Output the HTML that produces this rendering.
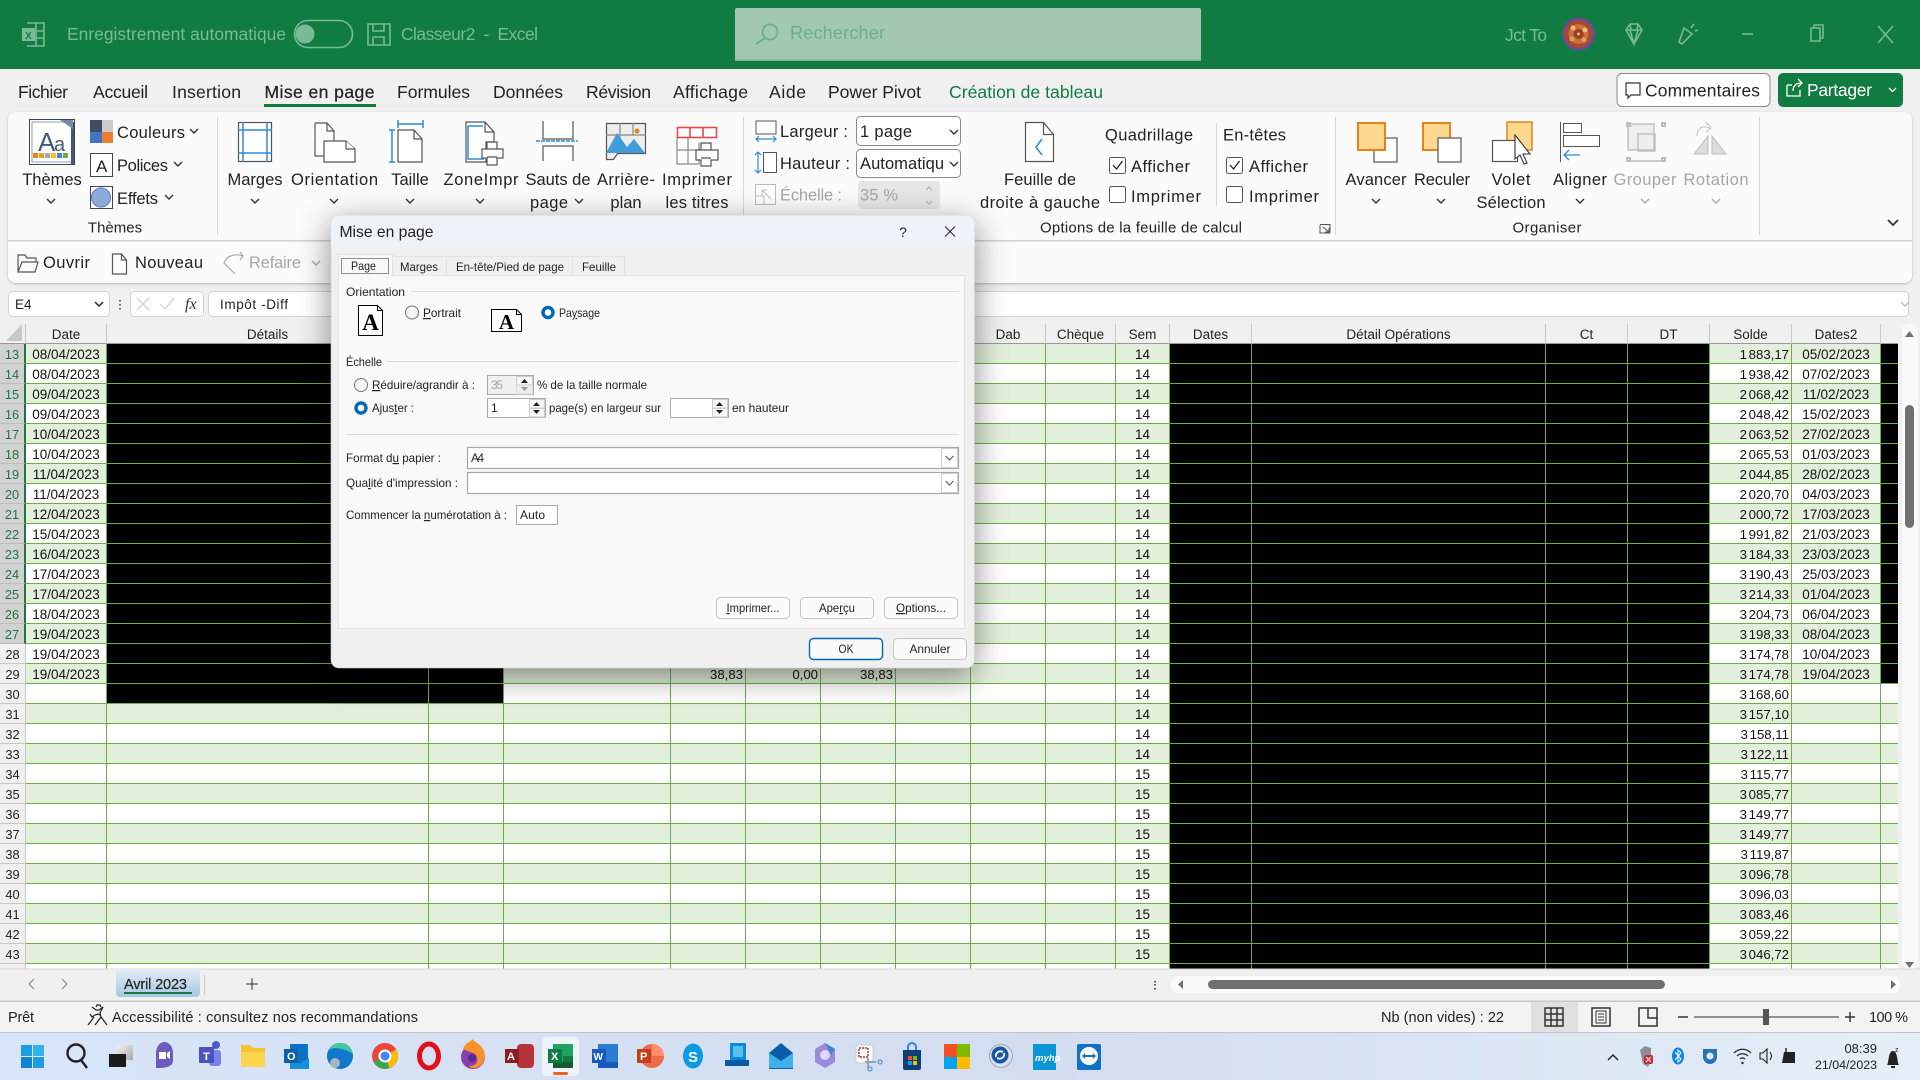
<!DOCTYPE html>
<html lang="fr"><head><meta charset="utf-8"><title>Classeur2 - Excel</title>
<style>
html,body{margin:0;padding:0;width:1920px;height:1080px;overflow:hidden;background:#f0f0f0;font-family:"Liberation Sans",sans-serif}
#wrap{position:absolute;left:0;top:324px;width:1898px;height:645px;overflow:hidden}
table{border-collapse:separate;border-spacing:0;table-layout:fixed;width:1898px}
td,th{height:20px;box-sizing:border-box;border-right:1px solid #70ad47;border-bottom:1px solid #70ad47;font:13.5px "Liberation Sans",sans-serif;padding:3px 2px 0;overflow:hidden;white-space:nowrap;text-align:center;color:#111;font-weight:normal;background:#fff;line-height:16px}
tr.g td{background:#e2efda}
th{background:#f0f0f0;border-right:1px solid #c8c8c8;border-bottom:1px solid #9a9a9a;color:#222}
td.h,tr.g td.h{background:#f0f0f0;border-right:1px solid #c8c8c8;border-bottom:1px solid #c8c8c8;font-size:12.8px;color:#222;padding:3px 0 0}
td.s,tr.g td.s{background:#d2d2d2;border-right:2px solid #217346;border-bottom:1px solid #bdbdbd;font-size:12.8px;color:#217346;padding:3px 0 0}
td.k,tr.g td.k{background:#000}
td.n{text-align:right;word-spacing:-2px;font-size:13.2px}
svg{position:absolute;left:0;top:0}
svg text{font-family:"Liberation Sans",sans-serif;fill:#222}
.m{text-anchor:middle}
.r{font-size:16.5px}
.t{font-size:17.6px}
.d{font-size:12px}
.tb{fill:#79ba97!important;font-size:17.4px}
.gr{fill:#a6a6a6!important}
</style></head><body>
<div id="wrap"><table>
<colgroup><col style="width:26px"><col style="width:81px"><col style="width:322px"><col style="width:75px"><col style="width:167px"><col style="width:75px"><col style="width:75px"><col style="width:75px"><col style="width:75px"><col style="width:75px"><col style="width:70px"><col style="width:54px"><col style="width:82px"><col style="width:294px"><col style="width:82px"><col style="width:82px"><col style="width:82px"><col style="width:89px"><col style="width:18px"></colgroup>
<tr><th></th><th>Date</th><th>Détails</th><th></th><th></th><th></th><th></th><th></th><th></th><th>Dab</th><th>Chèque</th><th>Sem</th><th>Dates</th><th>Détail Opérations</th><th>Ct</th><th>DT</th><th>Solde</th><th>Dates2</th><th></th></tr>
<tr class="g"><td class="s">13</td><td>08/04/2023</td><td class="k"></td><td class="k"></td><td></td><td></td><td></td><td></td><td></td><td></td><td></td><td>14</td><td class="k"></td><td class="k"></td><td class="k"></td><td class="k"></td><td class="n">1 883,17</td><td>05/02/2023</td><td class="k"></td></tr>
<tr><td class="s">14</td><td>08/04/2023</td><td class="k"></td><td class="k"></td><td></td><td></td><td></td><td></td><td></td><td></td><td></td><td>14</td><td class="k"></td><td class="k"></td><td class="k"></td><td class="k"></td><td class="n">1 938,42</td><td>07/02/2023</td><td class="k"></td></tr>
<tr class="g"><td class="s">15</td><td>09/04/2023</td><td class="k"></td><td class="k"></td><td></td><td></td><td></td><td></td><td></td><td></td><td></td><td>14</td><td class="k"></td><td class="k"></td><td class="k"></td><td class="k"></td><td class="n">2 068,42</td><td>11/02/2023</td><td class="k"></td></tr>
<tr><td class="s">16</td><td>09/04/2023</td><td class="k"></td><td class="k"></td><td></td><td></td><td></td><td></td><td></td><td></td><td></td><td>14</td><td class="k"></td><td class="k"></td><td class="k"></td><td class="k"></td><td class="n">2 048,42</td><td>15/02/2023</td><td class="k"></td></tr>
<tr class="g"><td class="s">17</td><td>10/04/2023</td><td class="k"></td><td class="k"></td><td></td><td></td><td></td><td></td><td></td><td></td><td></td><td>14</td><td class="k"></td><td class="k"></td><td class="k"></td><td class="k"></td><td class="n">2 063,52</td><td>27/02/2023</td><td class="k"></td></tr>
<tr><td class="s">18</td><td>10/04/2023</td><td class="k"></td><td class="k"></td><td></td><td></td><td></td><td></td><td></td><td></td><td></td><td>14</td><td class="k"></td><td class="k"></td><td class="k"></td><td class="k"></td><td class="n">2 065,53</td><td>01/03/2023</td><td class="k"></td></tr>
<tr class="g"><td class="s">19</td><td>11/04/2023</td><td class="k"></td><td class="k"></td><td></td><td></td><td></td><td></td><td></td><td></td><td></td><td>14</td><td class="k"></td><td class="k"></td><td class="k"></td><td class="k"></td><td class="n">2 044,85</td><td>28/02/2023</td><td class="k"></td></tr>
<tr><td class="s">20</td><td>11/04/2023</td><td class="k"></td><td class="k"></td><td></td><td></td><td></td><td></td><td></td><td></td><td></td><td>14</td><td class="k"></td><td class="k"></td><td class="k"></td><td class="k"></td><td class="n">2 020,70</td><td>04/03/2023</td><td class="k"></td></tr>
<tr class="g"><td class="s">21</td><td>12/04/2023</td><td class="k"></td><td class="k"></td><td></td><td></td><td></td><td></td><td></td><td></td><td></td><td>14</td><td class="k"></td><td class="k"></td><td class="k"></td><td class="k"></td><td class="n">2 000,72</td><td>17/03/2023</td><td class="k"></td></tr>
<tr><td class="s">22</td><td>15/04/2023</td><td class="k"></td><td class="k"></td><td></td><td></td><td></td><td></td><td></td><td></td><td></td><td>14</td><td class="k"></td><td class="k"></td><td class="k"></td><td class="k"></td><td class="n">1 991,82</td><td>21/03/2023</td><td class="k"></td></tr>
<tr class="g"><td class="s">23</td><td>16/04/2023</td><td class="k"></td><td class="k"></td><td></td><td></td><td></td><td></td><td></td><td></td><td></td><td>14</td><td class="k"></td><td class="k"></td><td class="k"></td><td class="k"></td><td class="n">3 184,33</td><td>23/03/2023</td><td class="k"></td></tr>
<tr><td class="s">24</td><td>17/04/2023</td><td class="k"></td><td class="k"></td><td></td><td></td><td></td><td></td><td></td><td></td><td></td><td>14</td><td class="k"></td><td class="k"></td><td class="k"></td><td class="k"></td><td class="n">3 190,43</td><td>25/03/2023</td><td class="k"></td></tr>
<tr class="g"><td class="s">25</td><td>17/04/2023</td><td class="k"></td><td class="k"></td><td></td><td></td><td></td><td></td><td></td><td></td><td></td><td>14</td><td class="k"></td><td class="k"></td><td class="k"></td><td class="k"></td><td class="n">3 214,33</td><td>01/04/2023</td><td class="k"></td></tr>
<tr><td class="s">26</td><td>18/04/2023</td><td class="k"></td><td class="k"></td><td></td><td></td><td></td><td></td><td></td><td></td><td></td><td>14</td><td class="k"></td><td class="k"></td><td class="k"></td><td class="k"></td><td class="n">3 204,73</td><td>06/04/2023</td><td class="k"></td></tr>
<tr class="g"><td class="s">27</td><td>19/04/2023</td><td class="k"></td><td class="k"></td><td></td><td></td><td></td><td></td><td></td><td></td><td></td><td>14</td><td class="k"></td><td class="k"></td><td class="k"></td><td class="k"></td><td class="n">3 198,33</td><td>08/04/2023</td><td class="k"></td></tr>
<tr><td class="h">28</td><td>19/04/2023</td><td class="k"></td><td class="k"></td><td></td><td></td><td></td><td></td><td></td><td></td><td></td><td>14</td><td class="k"></td><td class="k"></td><td class="k"></td><td class="k"></td><td class="n">3 174,78</td><td>10/04/2023</td><td class="k"></td></tr>
<tr class="g"><td class="h">29</td><td>19/04/2023</td><td class="k"></td><td class="k"></td><td></td><td class="n">38,83</td><td class="n">0,00</td><td class="n">38,83</td><td></td><td></td><td></td><td>14</td><td class="k"></td><td class="k"></td><td class="k"></td><td class="k"></td><td class="n">3 174,78</td><td>19/04/2023</td><td class="k"></td></tr>
<tr><td class="h">30</td><td></td><td class="k"></td><td class="k"></td><td></td><td></td><td></td><td></td><td></td><td></td><td></td><td>14</td><td class="k"></td><td class="k"></td><td class="k"></td><td class="k"></td><td class="n">3 168,60</td><td></td><td></td></tr>
<tr class="g"><td class="h">31</td><td></td><td></td><td></td><td></td><td></td><td></td><td></td><td></td><td></td><td></td><td>14</td><td class="k"></td><td class="k"></td><td class="k"></td><td class="k"></td><td class="n">3 157,10</td><td></td><td></td></tr>
<tr><td class="h">32</td><td></td><td></td><td></td><td></td><td></td><td></td><td></td><td></td><td></td><td></td><td>14</td><td class="k"></td><td class="k"></td><td class="k"></td><td class="k"></td><td class="n">3 158,11</td><td></td><td></td></tr>
<tr class="g"><td class="h">33</td><td></td><td></td><td></td><td></td><td></td><td></td><td></td><td></td><td></td><td></td><td>14</td><td class="k"></td><td class="k"></td><td class="k"></td><td class="k"></td><td class="n">3 122,11</td><td></td><td></td></tr>
<tr><td class="h">34</td><td></td><td></td><td></td><td></td><td></td><td></td><td></td><td></td><td></td><td></td><td>15</td><td class="k"></td><td class="k"></td><td class="k"></td><td class="k"></td><td class="n">3 115,77</td><td></td><td></td></tr>
<tr class="g"><td class="h">35</td><td></td><td></td><td></td><td></td><td></td><td></td><td></td><td></td><td></td><td></td><td>15</td><td class="k"></td><td class="k"></td><td class="k"></td><td class="k"></td><td class="n">3 085,77</td><td></td><td></td></tr>
<tr><td class="h">36</td><td></td><td></td><td></td><td></td><td></td><td></td><td></td><td></td><td></td><td></td><td>15</td><td class="k"></td><td class="k"></td><td class="k"></td><td class="k"></td><td class="n">3 149,77</td><td></td><td></td></tr>
<tr class="g"><td class="h">37</td><td></td><td></td><td></td><td></td><td></td><td></td><td></td><td></td><td></td><td></td><td>15</td><td class="k"></td><td class="k"></td><td class="k"></td><td class="k"></td><td class="n">3 149,77</td><td></td><td></td></tr>
<tr><td class="h">38</td><td></td><td></td><td></td><td></td><td></td><td></td><td></td><td></td><td></td><td></td><td>15</td><td class="k"></td><td class="k"></td><td class="k"></td><td class="k"></td><td class="n">3 119,87</td><td></td><td></td></tr>
<tr class="g"><td class="h">39</td><td></td><td></td><td></td><td></td><td></td><td></td><td></td><td></td><td></td><td></td><td>15</td><td class="k"></td><td class="k"></td><td class="k"></td><td class="k"></td><td class="n">3 096,78</td><td></td><td></td></tr>
<tr><td class="h">40</td><td></td><td></td><td></td><td></td><td></td><td></td><td></td><td></td><td></td><td></td><td>15</td><td class="k"></td><td class="k"></td><td class="k"></td><td class="k"></td><td class="n">3 096,03</td><td></td><td></td></tr>
<tr class="g"><td class="h">41</td><td></td><td></td><td></td><td></td><td></td><td></td><td></td><td></td><td></td><td></td><td>15</td><td class="k"></td><td class="k"></td><td class="k"></td><td class="k"></td><td class="n">3 083,46</td><td></td><td></td></tr>
<tr><td class="h">42</td><td></td><td></td><td></td><td></td><td></td><td></td><td></td><td></td><td></td><td></td><td>15</td><td class="k"></td><td class="k"></td><td class="k"></td><td class="k"></td><td class="n">3 059,22</td><td></td><td></td></tr>
<tr class="g"><td class="h">43</td><td></td><td></td><td></td><td></td><td></td><td></td><td></td><td></td><td></td><td></td><td>15</td><td class="k"></td><td class="k"></td><td class="k"></td><td class="k"></td><td class="n">3 046,72</td><td></td><td></td></tr>
<tr><td class="h"></td><td></td><td></td><td></td><td></td><td></td><td></td><td></td><td></td><td></td><td></td><td></td><td class="k"></td><td class="k"></td><td class="k"></td><td class="k"></td><td></td><td></td><td></td></tr>
</table></div>

<svg width="1920" height="1080" viewBox="0 0 1920 1080" xmlns="http://www.w3.org/2000/svg">
<defs>
<filter id="dsh" x="-20%" y="-20%" width="140%" height="150%"><feDropShadow dx="0" dy="8" stdDeviation="16" flood-color="#000" flood-opacity=".45"/></filter>
<filter id="rsh" x="-2%" y="-10%" width="104%" height="125%"><feDropShadow dx="0" dy="1" stdDeviation="1.2" flood-color="#000" flood-opacity=".25"/></filter>
<path id="ch" d="M-4 -2 L0 2 L4 -2" fill="none" stroke="#333" stroke-width="1.4"/>
<path id="chg" d="M-4 -2 L0 2 L4 -2" fill="none" stroke="#aaa" stroke-width="1.4"/>
<linearGradient id="tbg" x1="0" x2="1" y1="0" y2="0"><stop offset="0" stop-color="#d8e5f8"/><stop offset=".55" stop-color="#d3ddef"/><stop offset="1" stop-color="#e4eff9"/></linearGradient>
<linearGradient id="tabg" x1="0" x2="0" y1="0" y2="1"><stop offset="0" stop-color="#e4edf5"/><stop offset="1" stop-color="#a3c8e2"/></linearGradient>
<linearGradient id="tvg" x1="0" x2="1" y1="0" y2="1"><stop offset="0" stop-color="#f4f4f4"/><stop offset="1" stop-color="#a8a8a8"/></linearGradient>
</defs>

<!-- title bar -->
<rect width="1920" height="69" fill="#107c41"/>
<g fill="none" stroke="#79ba97" stroke-width="1.600">
<path d="M27 23h17v23h-17M36 23v23M27 31h17M27 38h17"/><rect x="22" y="28" width="13" height="13" fill="#79ba97" stroke="none"/>
<rect x="294.500" y="20.500" width="58" height="27" rx="13.500"/>
<path d="M368 24h22v21h-22zM373 24v7h11v-7M373 45v-8h11v8"/>
</g>
<text x="25" y="39" font-size="10" style="fill:#107c41;font-weight:bold">X</text>
<circle cx="305" cy="34" r="9.500" fill="#79ba97"/>
<text x="67" y="40" class="tb" textLength="219">Enregistrement automatique</text>
<text x="401" y="40" class="tb" textLength="137" style="white-space:pre">Classeur2  -  Excel</text>
<rect x="735" y="8" width="466" height="53" rx="2" fill="#a2c8b4"/><rect x="735" y="59.500" width="466" height="1.500" fill="#79b598"/>
<circle cx="770" cy="32" r="7.500" fill="none" stroke="#6bb08a" stroke-width="1.800"/><path d="M765 38l-9 6" stroke="#6bb08a" stroke-width="2"/>
<text x="790" y="39" style="fill:#6bb08a;font-size:18px" textLength="95">Rechercher</text>
<text x="1505" y="41" class="tb" textLength="42">Jct To</text>
<circle cx="1578.500" cy="34" r="16.500" fill="#6a4a9a"/><circle cx="1578.500" cy="34" r="14" fill="#a8492f"/><circle cx="1578.500" cy="34" r="10" fill="#c8703a"/><circle cx="1578.500" cy="34" r="5" fill="#a03a2a"/><circle cx="1573" cy="28" r="2.500" fill="#e6c070"/><circle cx="1585" cy="30" r="2.500" fill="#e6c070"/><circle cx="1584" cy="40" r="2.500" fill="#d9a05a"/><circle cx="1572" cy="39" r="2.500" fill="#d9a05a"/><circle cx="1578.500" cy="34" r="1.500" fill="#e6c070"/>
<g fill="none" stroke="#79ba97" stroke-width="1.600">
<path d="M1626 30l4-6h8l4 6-8 14zM1626 30h16M1630 30l4 14 4-14M1630 24l1 6M1638 24l-1 6"/>
<path d="M1679 42l5-14 8 6-10 10zM1691 28l3-4M1695 31l3-1"/>
<path d="M1742 34h11"/>
<path d="M1811 28h9v13h-9zM1814 28v-3h9v13h-3"/>
<path d="M1878 26l15 17M1893 26l-15 17"/>
</g>

<!-- ribbon tabs -->
<g class="t">
<text class="t" x="18" y="98" textLength="50">Fichier</text>
<text class="t" x="93" y="98" textLength="55">Accueil</text>
<text class="t" x="172" y="98" textLength="69">Insertion</text>
<text class="t" x="264.500" y="98" textLength="110" style="font-weight:500;stroke:#222;stroke-width:.25">Mise en page</text>
<text class="t" x="397" y="98" textLength="73">Formules</text>
<text class="t" x="493" y="98" textLength="70">Données</text>
<text class="t" x="586" y="98" textLength="65">Révision</text>
<text class="t" x="673" y="98" textLength="75">Affichage</text>
<text class="t" x="769" y="98" textLength="37">Aide</text>
<text class="t" x="828" y="98" textLength="93">Power Pivot</text>
<text class="t" x="949" y="98" textLength="154" style="fill:#107c41">Création de tableau</text>
</g>
<rect x="264" y="104" width="112" height="3" fill="#107c41"/>
<rect x="1617" y="73.500" width="153" height="33" rx="5" fill="#fff" stroke="#8a8a8a"/>
<path d="M1626 83h14v12h-9l-3 3v-3h-2z" fill="none" stroke="#333" stroke-width="1.200"/>
<text x="1645" y="96.500" font-size="17.400" textLength="115">Commentaires</text>
<rect x="1778" y="73" width="125" height="34" rx="5" fill="#107c41"/>
<path d="M1787 85v11h13v-6M1787 85h5M1793 91c0-5 3-8 8-8M1798 79l4 4-4 4" fill="none" stroke="#fff" stroke-width="1.300"/>
<text x="1807" y="96" style="fill:#fff;font-size:17.400px" textLength="65">Partager</text>
<path d="M1889 88l3.500 3.500 3.500-3.500" fill="none" stroke="#fff" stroke-width="1.300"/>

<!-- ribbon panel -->
<rect x="8" y="112" width="1904" height="171" rx="8" fill="#fbfbfb" filter="url(#rsh)"/>
<rect x="8" y="240" width="1904" height="1.500" fill="#cfcfcf"/>
<g stroke="#d8d8d8"><path d="M217.500 117v118M743.500 117v118M1335.500 117v118M1759.500 117v118M1216.500 123v84"/></g>

<!-- Themes -->
<rect x="29.500" y="119.500" width="45" height="45" fill="#fff" stroke="#444"/>
<path d="M32 122h37l3 3v37H32z" fill="#fff" stroke="#8aa0b8"/>
<rect x="71" y="122" width="3" height="42" fill="#3e5a78"/><path d="M60 120l13 0v9z" fill="#708aa8"/>
<text x="38" y="151" style="fill:#3e5a78;font-size:26px">A</text><text x="54" y="151" style="fill:#3e5a78;font-size:20px">a</text>
<rect x="33" y="153" width="5" height="5" fill="#e88020"/><rect x="39" y="153" width="5" height="5" fill="#e8a020"/><rect x="45" y="153" width="5" height="5" fill="#a8a8a8"/><rect x="51" y="153" width="5" height="5" fill="#f8c020"/><rect x="57" y="153" width="5" height="5" fill="#4a88c8"/><rect x="63" y="153" width="5" height="5" fill="#70ad47"/>
<text x="52" y="185" class="r m">Thèmes</text><use href="#ch" x="51" y="201"/>
<rect x="90" y="120" width="12" height="12" fill="#3e4e62"/><rect x="102" y="120" width="11" height="12" fill="#ccc"/><rect x="90" y="132" width="12" height="11" fill="#4472c4"/><rect x="102" y="132" width="11" height="11" fill="#ed7d31"/>
<text x="117" y="138" class="r" textLength="68">Couleurs</text><use href="#ch" x="194" y="131"/>
<rect x="90.500" y="153.500" width="22" height="23" fill="#fff" stroke="#444"/><text x="96" y="172" style="font-size:17px">A</text>
<text x="117" y="171" class="r" textLength="51">Polices</text><use href="#ch" x="178" y="164"/>
<rect x="90.500" y="186.500" width="22" height="22" fill="#fff" stroke="#444"/><circle cx="101" cy="197.500" r="9.500" fill="#8ea9db" stroke="#5b7fc0"/>
<text x="117" y="204" class="r" textLength="41">Effets</text><use href="#ch" x="169" y="197"/>
<text x="115" y="232.500" font-size="15" class="m">Thèmes</text>

<!-- Page setup -->
<g fill="#fff" stroke="#555" stroke-width="1.200">
<rect x="238.500" y="122.500" width="33" height="39"/>
<path d="M315 123h12l7 8v10M315 123v33h9M334 131h-7v-8"/><path d="M324 141h22l9 8v13h-31z"/><path d="M346 141v8h9"/>
<path d="M398 130h16l8 9v23h-24zM414 130v9h8"/>
<path d="M466 122h19l9 10v10h-8v20h-20zM485 122v10h9"/>
<path d="M487 142h10v7h6v9h-6v7h-10v-7h-5v-9h5z"/><path d="M487 149h10M487 157h10"/>
<path d="M543 121v18h30v-18"/><path d="M543 161v-15h30v15"/>
<path d="M606.500 123.500h39v30l-28 0l-4 6h-7z" fill="#eee"/><path d="M606 135h40M620 123v30M633 123v12" stroke="#888"/>
<path d="M677 137v27h22v-21M677 150h22M688 137v27M699 143" stroke="#888"/>
<path d="M701 143h10v7h7v10h-7v6h-10v-6h-5v-10h5z"/><path d="M701 150h10M701 158h10"/>
</g>
<g stroke="#2b8cd6" stroke-width="1.500" fill="none">
<path d="M243 122v40M267 122v40M238 130h34M238 153h34"/>
<path d="M398 124h25M398 120v8M423 120v8M392 130v32M389 130h6M389 162h6"/>
<path d="M468 126h15M468 126v33h16"/>
<path d="M536 141h42" stroke-dasharray="4 1"/>
</g>
<path d="M606 153l11-20 10 14 7-8 11 14z" fill="#3f9ed8"/><circle cx="637" cy="131" r="2.500" fill="#e8801a"/>
<rect x="677.500" y="127.500" width="39" height="10" fill="#fff" stroke="#e8484a" stroke-width="1.600"/><path d="M690 127v10M703 127v10" stroke="#e8484a" stroke-width="1.600"/>
<text x="255" y="185" class="r m">Marges</text><use href="#ch" x="255" y="201"/>
<text x="334.500" y="185" class="r m" textLength="87">Orientation</text><use href="#ch" x="334" y="201"/>
<text x="410" y="185" class="r m">Taille</text><use href="#ch" x="410" y="201"/>
<text x="481" y="185" class="r m" textLength="75">ZoneImpr</text><use href="#ch" x="480" y="201"/>
<text x="558" y="185" class="r m" textLength="65">Sauts de</text><text x="530" y="208" class="r" textLength="38">page</text><use href="#ch" x="579" y="201"/>
<text x="626" y="185" class="r m" textLength="58">Arrière-</text><text x="626" y="208" class="r m">plan</text>
<text x="697" y="185" class="r m" textLength="70">Imprimer</text><text x="697" y="208" class="r m" textLength="63">les titres</text>

<!-- Scale to fit -->
<g fill="#fff" stroke="#555"><rect x="756" y="121" width="20" height="13"/><rect x="763.500" y="152.500" width="13" height="20"/></g>
<g fill="none" stroke="#2b8cd6" stroke-width="1.200"><path d="M756 139h20M759 136l-3 3 3 3M773 136l3 3-3 3"/><path d="M758 152v21M755 155l3-3 3 3M755 170l3 3 3-3"/></g>
<g fill="#fff" stroke="#bbb"><rect x="755.500" y="184.500" width="20" height="20"/><path d="M762 190l9 9M762 190h5M762 190v5M755 196h9v9"/></g>
<text x="780" y="137" class="r" textLength="68">Largeur :</text>
<text x="780" y="169" class="r" textLength="70">Hauteur :</text>
<text x="780" y="200.500" class="r gr" textLength="62">Échelle :</text>
<rect x="856.500" y="116.500" width="104" height="29" rx="4" fill="#fff" stroke="#8a8a8a"/><text x="860" y="137" class="r" textLength="52">1 page</text><use href="#ch" x="954" y="132"/>
<rect x="856.500" y="149.500" width="104" height="28" rx="4" fill="#fff" stroke="#8a8a8a"/><text x="860" y="169" class="r" textLength="84">Automatiqu</text><use href="#ch" x="954" y="164"/>
<rect x="858" y="181" width="82" height="28" rx="4" fill="#e6e6e6"/><text x="860" y="200.500" class="r gr" textLength="38">35 %</text>
<path d="M926 190l3-3 3 3M926 201l3 3 3-3" fill="none" stroke="#aaa"/>

<!-- Sheet options -->
<path d="M1025.500 122.500h18l10 12v27h-28zM1043.500 122.500v12h10" fill="#fff" stroke="#555" stroke-width="1.200"/><path d="M1042 139l-6 8 6 8" fill="none" stroke="#2b8cd6" stroke-width="1.500"/>
<text x="1040" y="185" class="r m" textLength="72">Feuille de</text><text x="1040" y="208" class="r m" textLength="120">droite à gauche</text>
<text x="1105" y="140.500" class="r" textLength="88">Quadrillage</text>
<text x="1223" y="140.500" class="r" textLength="63">En-têtes</text>
<g fill="#fff" stroke="#555"><rect x="1109.500" y="157.500" width="16" height="16" rx="2"/><rect x="1109.500" y="186.500" width="16" height="16" rx="2"/><rect x="1226.500" y="157.500" width="16" height="16" rx="2"/><rect x="1226.500" y="186.500" width="16" height="16" rx="2"/></g>
<path d="M1113 165l3.500 4 6-8M1230 165l3.500 4 6-8" fill="none" stroke="#222" stroke-width="1.300"/>
<text x="1131" y="172" class="r" textLength="59">Afficher</text><text x="1131" y="202" class="r" textLength="70">Imprimer</text>
<text x="1249" y="172" class="r" textLength="59">Afficher</text><text x="1249" y="202" class="r" textLength="70">Imprimer</text>
<text x="1040" y="232.500" font-size="15" textLength="202">Options de la feuille de calcul</text>
<path d="M1320 224.500h10v8M1320 225v8h10M1323 227l6 5M1329 228v4h-4" fill="none" stroke="#555"/>

<!-- Arrange -->
<rect x="1374" y="138" width="23" height="24" fill="#fff" stroke="#555" stroke-width="1.200"/><rect x="1358" y="123" width="27" height="27" fill="#fdd98f" stroke="#e8811a" stroke-width="2"/>
<rect x="1423" y="123" width="27" height="27" fill="#fdd98f" stroke="#e8811a" stroke-width="2"/><rect x="1438" y="138" width="23" height="24" fill="#fff" stroke="#555" stroke-width="1.200"/>
<rect x="1507" y="122" width="25" height="28" fill="#fdd98f" stroke="#e8811a" stroke-width="1.500"/><rect x="1492.500" y="140.500" width="25" height="21" fill="#fff" stroke="#555" stroke-width="1.200"/>
<path d="M1515 135v24l5-4 4 9 3-1-4-9h7z" fill="#fff" stroke="#333" stroke-width="1.100"/>
<path d="M1560.500 122v40" stroke="#555"/><rect x="1563.500" y="123.500" width="18" height="9" fill="#fff" stroke="#555"/><rect x="1563.500" y="135.500" width="36" height="11" fill="#fff" stroke="#555"/><path d="M1564 155h16M1569 150l-5 5 5 5" fill="none" stroke="#2b8cd6" stroke-width="1.300"/>
<g fill="none" stroke="#bdbdbd" stroke-width="1.400"><rect x="1628" y="124" width="26" height="26" fill="#eee"/><rect x="1638" y="134" width="17" height="17"/><path d="M1627 123h3v3h-3zM1662 123h3v3h-3zM1627 158h3v3h-3zM1662 158h3v3h-3z" stroke-width="2"/><path d="M1630 161h35"/></g>
<path d="M1694 154l14-18v18zM1712 136l14 18h-14z" fill="#dcdcdc" stroke="#bdbdbd"/><path d="M1697 136c0-8 6-11 12-8M1706 122l5 6-5 4" fill="none" stroke="#bdbdbd"/>
<text x="1376" y="185" class="r m" textLength="61">Avancer</text><use href="#ch" x="1376" y="201"/>
<text x="1442" y="185" class="r m" textLength="56">Reculer</text><use href="#ch" x="1441" y="201"/>
<text x="1511" y="185" class="r m" textLength="39">Volet</text><text x="1511" y="208" class="r m" textLength="69">Sélection</text>
<text x="1580" y="185" class="r m" textLength="54">Aligner</text><use href="#ch" x="1580" y="201"/>
<text x="1645" y="185" class="r m gr" textLength="63">Grouper</text><use href="#chg" x="1645" y="201"/>
<text x="1716" y="185" class="r m gr" textLength="65">Rotation</text><use href="#chg" x="1716" y="201"/>
<text x="1547" y="232.500" font-size="15" class="m" textLength="69">Organiser</text>
<path d="M1888 220l5 5 5-5" fill="none" stroke="#333" stroke-width="1.800"/>

<!-- QAT -->
<path d="M18 272v-17h7l2 3h9v4M18 272l4-10h16l-3 10z" fill="none" stroke="#555" stroke-width="1.200"/>
<text x="43" y="268" class="r" textLength="47">Ouvrir</text>
<path d="M112.500 254h9l5 6v14h-14zM121.500 254v6h5" fill="#fff" stroke="#555" stroke-width="1.200"/>
<text x="135" y="268" class="r" textLength="68">Nouveau</text>
<path d="M243 256c-8-3-17 0-19 7l11 11M240 252l3 4-3 4" fill="none" stroke="#aaa" stroke-width="1.200"/>
<text x="249" y="268" class="r gr" textLength="52">Refaire</text><use href="#chg" x="316" y="263"/>

<!-- formula bar -->
<g fill="#fff" stroke="#d4d4d4"><rect x="8.500" y="291.500" width="101" height="25" rx="4"/><rect x="130.500" y="291.500" width="73" height="25" rx="4"/><rect x="208.500" y="291.500" width="1700" height="25" rx="4"/></g>
<text x="15" y="309" font-size="13.500">E4</text><path d="M95 302l4 4 4-4" fill="none" stroke="#222" stroke-width="1.400"/>
<path d="M120 300v1.500M120 304v1.500M120 308v1.500" stroke="#444" stroke-width="1.600"/>
<path d="M137 298l12 12M149 298l-12 12M160 304l5 5 9-11" fill="none" stroke="#ccc" stroke-width="1.200"/>
<text x="185" y="309" style="font-family:'Liberation Serif',serif;font-style:italic;font-size:16px;fill:#333">fx</text>
<text x="220" y="309" font-size="13.500" textLength="68">Impôt -Diff</text>
<path d="M1901 302l4 4 4-4" fill="none" stroke="#aaa"/>
<path d="M6 340h16v-17z" fill="#c8c8c8" transform="translate(0 1)"/>

<!-- scrollbars -->
<rect x="1898" y="324" width="22" height="645" fill="#f0f0f0"/>
<rect x="1902" y="324" width="16" height="645" rx="6" fill="#fafafa"/>
<path d="M1905 337l4.500-6 4.500 6z" fill="#707070"/><path d="M1905 962l4.500 6 4.500-6z" fill="#707070"/>
<rect x="1905" y="405" width="9" height="123" rx="4.500" fill="#707070"/>

<!-- sheet tabs -->
<rect x="0" y="969" width="1920" height="32" fill="#f0f0f0"/><rect x="0" y="968.500" width="1920" height="1" fill="#d8d8d8"/>
<path d="M34 979l-5 5 5 5M62 979l5 5-5 5" fill="none" stroke="#888" stroke-width="1.100"/>
<path d="M116 969h84v24a4 4 0 0 1-4 4h-76a4 4 0 0 1-4-4z" fill="url(#tabg)"/>
<text x="124" y="989" font-size="14.500" textLength="63" style="stroke:#222;stroke-width:.2">Avril 2023</text>
<rect x="124" y="992" width="68" height="2" fill="#217346"/>
<path d="M204.500 975v20" stroke="#ccc"/>
<path d="M252 978v12M246 984h12" stroke="#333"/>
<path d="M1155 981v1.500M1155 984v1.500M1155 988v1.500" stroke="#333" stroke-width="1.600"/>
<rect x="1171" y="976" width="729" height="17" rx="7" fill="#fafafa"/>
<rect x="1208" y="980" width="457" height="9" rx="4.500" fill="#707070"/>
<path d="M1183 980l-5 4.500 5 4.500zM1891 980l5 4.500-5 4.500z" fill="#707070"/>

<!-- status bar -->
<rect x="0" y="1001" width="1920" height="31" fill="#f3f3f3"/><rect x="0" y="1000.500" width="1920" height="1.500" fill="#c8c8c8"/><rect x="0" y="1032" width="1920" height="1" fill="#c0c4c8"/>
<text x="8" y="1022" font-size="14.500" fill="#333" textLength="26">Prêt</text>
<path d="M92 1007l4 3h3l4-3-3 6 1 4 6 8M101 1017l-6 8M90 1014l2 3 3-2 3-1 2 1M88 1025l6-8M96 1007l1-2h3l1 2" fill="none" stroke="#222" stroke-width="1.200"/>
<text x="112" y="1022" font-size="14.500" textLength="306">Accessibilité : consultez nos recommandations</text>
<text x="1381" y="1022" font-size="14.500" textLength="123">Nb (non vides) : 22</text>
<rect x="1531" y="1002" width="47" height="30" fill="#e0e0e0"/>
<g fill="none" stroke="#333" stroke-width="1.500"><rect x="1545" y="1008" width="18" height="18"/><path d="M1551 1008v18M1557 1008v18M1545 1014h18M1545 1020h18"/>
<rect x="1592" y="1008" width="18" height="18"/><rect x="1596" y="1011" width="10" height="12" stroke-width="1"/><path d="M1598 1014h6M1598 1017h6M1598 1020h6" stroke-width="1"/>
<path d="M1639 1008h18v18h-18zM1648 1008v10h9"/>
<path d="M1678 1017h10"/><path d="M1845 1017h10M1850 1012v10"/></g>
<path d="M1694 1017h145" stroke="#555" stroke-width="1.200"/><rect x="1763" y="1009" width="6" height="16" fill="#555"/>
<text x="1869" y="1022" font-size="14.500" textLength="39">100 %</text>

<!-- taskbar -->
<rect x="0" y="1033" width="1920" height="47" fill="url(#tbg)"/>
<rect x="542" y="1037" width="37" height="39" rx="4" fill="#eef2f9"/><rect x="553" y="1072" width="15" height="3" rx="1.500" fill="#f2602a"/>
<g fill="#1d9ce0"><rect x="21" y="1045" width="11" height="11"/><rect x="33" y="1045" width="11" height="11" fill="#32b3ea"/><rect x="21" y="1057" width="11" height="11" fill="#0f84d0"/><rect x="33" y="1057" width="11" height="11"/></g>
<circle cx="76" cy="1053" r="8.500" fill="none" stroke="#222" stroke-width="2.400"/><path d="M81 1060l6 8" stroke="#222" stroke-width="2.400"/>
<rect x="116" y="1045" width="17" height="15" fill="url(#tvg)"/><rect x="109" y="1054" width="17" height="13" fill="#1a1a1a"/>
<path d="M156 1054c0-16 17-16 17 0v6c0 8-10 8-17 8z" fill="#6a5bbd"/><rect x="159" y="1052" width="7" height="7" fill="#fff"/><path d="M167 1053l3-2v8l-3-2z" fill="#fff"/>
<circle cx="216" cy="1045" r="4" fill="#5059c9"/><rect x="209" y="1050" width="12" height="16" rx="3" fill="#7b83eb"/><rect x="199" y="1047" width="15" height="16" rx="1" fill="#4b53bc"/><text x="203" y="1060" style="fill:#fff;font-size:11px;font-weight:bold">T</text>
<path d="M241 1045h9l3 3h12v19h-24z" fill="#fbc02d"/><rect x="241" y="1052" width="24" height="15" fill="#ffd54f"/>
<rect x="290" y="1044" width="18" height="22" rx="1" fill="#0a72c6"/><path d="M290 1058l9 6 10-6v11h-19z" fill="#1490df"/><rect x="284" y="1049" width="14" height="14" fill="#0f5ea8"/><text x="287" y="1060" style="fill:#fff;font-size:11px;font-weight:bold">O</text>
<circle cx="340" cy="1056" r="13" fill="#0f78c8"/><path d="M329 1050c4-10 22-10 24 4-7-5-20-8-24-4z" fill="#43c7a0"/><circle cx="335" cy="1063" r="5" fill="#aab4bc"/>
<circle cx="385" cy="1056" r="13" fill="#e8483a"/><path d="M385 1056l11.300-6.500a13 13 0 0 1-7 18.500z" fill="#fbbc05"/><path d="M385 1056l4.300 12a13 13 0 0 1-15.600-6z" fill="#34a853"/><circle cx="385" cy="1056" r="5.500" fill="#4285f4" stroke="#fff" stroke-width="2"/>
<ellipse cx="429" cy="1056" rx="9.500" ry="12" fill="none" stroke="#e0101c" stroke-width="5"/>
<circle cx="473" cy="1057" r="12" fill="#8a3fb0"/><path d="M463 1049c2-6 7-7 10-10 1 4 10 4 12 16 0 9-6 13-12 13-5 0-3-2-3-2 8 0 9-8 5-12-3-2-8-3-12-5z" fill="#f9902a"/><circle cx="472" cy="1058" r="4" fill="#5a2a90"/>
<rect x="517" y="1044" width="17" height="24" rx="4" fill="#b7333a"/><rect x="505" y="1049" width="14" height="14" fill="#8d1c25"/><text x="507" y="1060" style="fill:#fff;font-size:11px;font-weight:bold">A</text>
<rect x="553" y="1044" width="20" height="24" rx="1" fill="#21a366"/><rect x="563" y="1056" width="10" height="6" fill="#107c41"/><rect x="553" y="1062" width="20" height="6" fill="#185c37"/><rect x="548" y="1049" width="14" height="14" fill="#107c41"/><text x="551" y="1060" style="fill:#fff;font-size:11px;font-weight:bold">X</text>
<rect x="598" y="1044" width="20" height="24" rx="1" fill="#2b7cd3"/><rect x="598" y="1062" width="20" height="6" fill="#185abd"/><rect x="592" y="1049" width="14" height="14" fill="#185abd"/><text x="593.500" y="1060" style="fill:#fff;font-size:10px;font-weight:bold">W</text>
<circle cx="652" cy="1056" r="12" fill="#ed6c47"/><path d="M652 1056v-12a12 12 0 0 1 12 12z" fill="#ff8f6b"/><rect x="637" y="1049" width="14" height="14" fill="#c43e1c"/><text x="640" y="1060" style="fill:#fff;font-size:11px;font-weight:bold">P</text>
<ellipse cx="693" cy="1056" rx="10" ry="12.500" fill="#0b9be0"/><text x="688" y="1062" style="fill:#fff;font-size:15px;font-weight:bold">S</text>
<rect x="730" y="1043" width="16" height="19" fill="#0a8ad6"/><rect x="725" y="1060" width="24" height="6" fill="#0a5aa0"/><rect x="733" y="1046" width="10" height="11" fill="#58c0f0"/>
<path d="M769 1053l12-10 12 10v16h-24z" fill="#0a5da8"/><path d="M769 1053l12 8 12-8v15h-24z" fill="#40b0e8"/>
<path d="M825 1043l10 6v13l-10 6-10-6v-13z" fill="#9a8ad8"/><circle cx="825" cy="1055" r="5" fill="#dcd8f4"/><path d="M825 1043l10 6-4 6z" fill="#3b82d8"/>
<rect x="856" y="1045" width="17" height="18" rx="2" fill="#fff" stroke="#ccc"/><rect x="859" y="1048" width="9" height="9" fill="none" stroke="#c03020" stroke-dasharray="2 1" stroke-width="1.500"/><path d="M868 1058v10M865 1062h11" stroke="#8ca4bc" stroke-width="2"/><circle cx="880" cy="1062" r="2" fill="none" stroke="#3a8ad0"/><circle cx="870" cy="1069" r="2" fill="none" stroke="#3a8ad0"/>
<path d="M903 1050h18v18a2 2 0 0 1-2 2h-14a2 2 0 0 1-2-2z" fill="#123d74"/><path d="M908 1050v-3a4 4 0 0 1 8 0v3" fill="none" stroke="#2a88d8" stroke-width="2"/><rect x="908" y="1056" width="4" height="4" fill="#f25022"/><rect x="913" y="1056" width="4" height="4" fill="#7fba00"/><rect x="908" y="1061" width="4" height="4" fill="#00a4ef"/><rect x="913" y="1061" width="4" height="4" fill="#ffb900"/>
<rect x="944" y="1044" width="13" height="13" fill="#f25022"/><rect x="957" y="1044" width="13" height="13" fill="#7fba00"/><rect x="944" y="1057" width="13" height="12" fill="#00a4ef"/><rect x="957" y="1057" width="13" height="12" fill="#ffb900"/>
<circle cx="1001" cy="1056" r="11.500" fill="#d8e0ea" stroke="#9ca8b8"/><circle cx="1000" cy="1055" r="8.500" fill="#1a56a8"/><path d="M996 1057c-1-4 3-7 7-5M1004 1053c1 4-3 7-7 5" fill="none" stroke="#fff" stroke-width="1.800"/>
<rect x="1033" y="1044" width="23" height="26" fill="#0a96d6"/><text x="1035" y="1061" style="fill:#fff;font-size:9.500px;font-style:italic;font-weight:bold">myhp</text>
<rect x="1077" y="1044" width="24" height="26" rx="2" fill="#0e72c8"/><circle cx="1089" cy="1056" r="9" fill="#fff"/><path d="M1082 1056l3-3v2h8v-2l3 3-3 3v-2h-8v2z" fill="#0e72c8"/>

<!-- tray -->
<path d="M1608 1060l5-5 5 5" fill="none" stroke="#222" stroke-width="1.400"/>
<path d="M1640 1050l5-4 6 2v14l-3 5-5-3z" fill="#8a9098"/><rect x="1644" y="1055" width="9" height="9" rx="2" fill="#d02c30"/><path d="M1646 1057l5 5M1651 1057l-5 5" stroke="#fff"/>
<ellipse cx="1678" cy="1056" rx="6" ry="8.500" fill="#0a84e8"/><path d="M1675 1052l6 7-3 3v-12l3 3-6 7" fill="none" stroke="#fff"/>
<path d="M1703 1049h14v8a7 7 0 0 1-14 0z" fill="#2b72b8"/><circle cx="1710" cy="1056" r="3.500" fill="#dce8f4"/>
<path d="M1734 1053c5-5 12-5 17 0M1737 1056c3-3 8-3 11 0M1740 1059c2-1.500 3-1.500 5 0" fill="none" stroke="#222" stroke-width="1.200"/><circle cx="1742.500" cy="1063" r="1.200" fill="#222"/>
<path d="M1760 1053h3l4-4v14l-4-4h-3zM1770 1052c2 3 2 5 0 8" fill="none" stroke="#222" stroke-width="1.100"/>
<path d="M1784 1052h11v11h-13z" fill="#222"/><path d="M1786 1048v4" stroke="#222" stroke-width="1.400"/>
<text x="1877" y="1053" font-size="13" style="text-anchor:end">08:39</text>
<text x="1877" y="1069" font-size="12.400" style="text-anchor:end">21/04/2023</text>
<path d="M1887 1065c2-2 1-14 6-14s4 12 6 14z" fill="#222"/><rect x="1891" y="1066" width="4" height="2" fill="#222"/><text x="1895" y="1052" font-size="7">z</text>

<!-- dialog -->
<rect x="331" y="215.500" width="643.500" height="452.500" rx="8" fill="#f0f0f0" filter="url(#dsh)" stroke="#c8c8c8" stroke-width=".6"/>
<path d="M331 246.500v-23a8 8 0 0 1 8-8h627.500a8 8 0 0 1 8 8v23z" fill="#eef3fa"/>
<text x="339.500" y="237" font-size="15.700" textLength="94">Mise en page</text>
<text x="903" y="237" font-size="14" class="m">?</text>
<path d="M945 226.500l10 10M955 226.500l-10 10" stroke="#222" stroke-width="1"/>
<rect x="338.500" y="275.500" width="626" height="353" fill="#f9f9f9" stroke="#e3e3e3"/>
<g fill="#f0f0f0" stroke="#e3e3e3"><rect x="392.500" y="256.500" width="54" height="19"/><rect x="446.500" y="256.500" width="126" height="19"/><rect x="572.500" y="256.500" width="52" height="19"/></g>
<rect x="338" y="254" width="54" height="22.500" fill="#f9f9f9"/><path d="M338.500 276v-21.500h54V276" fill="none" stroke="#e3e3e3"/>
<rect x="341.500" y="258.500" width="47" height="15" fill="none" stroke="#222" stroke-dasharray="1 1"/>
<text x="351" y="270" class="d" textLength="25" lengthAdjust="spacingAndGlyphs">Page</text>
<text x="400" y="271" class="d" textLength="38" lengthAdjust="spacingAndGlyphs">Marges</text>
<text x="456" y="271" class="d" textLength="108" lengthAdjust="spacingAndGlyphs">En-tête/Pied de page</text>
<text x="582" y="271" class="d" textLength="34" lengthAdjust="spacingAndGlyphs">Feuille</text>

<text x="346" y="296" class="d" textLength="59" lengthAdjust="spacingAndGlyphs">Orientation</text><path d="M411 291.500h548" stroke="#dcdcdc"/>
<path d="M358.500 305.500h19l5 5v25h-24zM377.500 305.500v5h5" fill="#fff" stroke="#000"/>
<text x="370.500" y="330" style="font-family:'Liberation Serif',serif;font-size:23px;fill:#000;text-anchor:middle;font-weight:bold">A</text>
<path d="M491.500 309.500h25l5 5v17h-30zM516.500 309.500v5h5" fill="#fff" stroke="#000"/>
<text x="506.500" y="329" style="font-family:'Liberation Serif',serif;font-size:21px;fill:#000;text-anchor:middle;font-weight:bold">A</text>
<circle cx="412" cy="312.500" r="6.500" fill="#f4f4f4" stroke="#777"/>
<text x="423" y="317" class="d" textLength="38" lengthAdjust="spacingAndGlyphs"><tspan text-decoration="underline">P</tspan>ortrait</text>
<circle cx="548" cy="312.500" r="5" fill="#fff" stroke="#0067c0" stroke-width="3.400"/>
<text x="559" y="317" class="d" textLength="41" lengthAdjust="spacingAndGlyphs">Pa<tspan text-decoration="underline">y</tspan>sage</text>

<text x="346" y="366" class="d" textLength="36" lengthAdjust="spacingAndGlyphs">Échelle</text><path d="M387 361.500h572" stroke="#dcdcdc"/>
<circle cx="361" cy="385" r="6.500" fill="#f4f4f4" stroke="#777"/>
<text x="372" y="389" class="d" textLength="103" lengthAdjust="spacingAndGlyphs"><tspan text-decoration="underline">R</tspan>éduire/agrandir à :</text>
<rect x="487.500" y="375.500" width="46" height="19" fill="#f0f0f0" stroke="#aaa"/><rect x="516.500" y="376.500" width="16" height="8.500" fill="#f7f7f7" stroke="#ccc"/><rect x="516.500" y="385.500" width="16" height="8.500" fill="#ececec" stroke="#ddd"/>
<path d="M521 383l3.500-4 3.500 4z" fill="#222"/><path d="M521 387l3.500 4 3.500-4z" fill="#999"/>
<text x="491" y="389" class="d gr" textLength="12">35</text>
<text x="537" y="389" class="d" textLength="110" lengthAdjust="spacingAndGlyphs">% de la taille normale</text>
<circle cx="361" cy="408" r="5" fill="#fff" stroke="#0067c0" stroke-width="3.400"/>
<text x="372" y="412" class="d" textLength="42" lengthAdjust="spacingAndGlyphs">Ajus<tspan text-decoration="underline">t</tspan>er :</text>
<rect x="487.500" y="398.500" width="58" height="19" fill="#fff" stroke="#aaa"/><rect x="529.500" y="399.500" width="15" height="8.500" fill="#f7f7f7" stroke="#ccc"/><rect x="529.500" y="408.500" width="15" height="8.500" fill="#f7f7f7" stroke="#ccc"/><path d="M533 406l3.500-4 3.500 4zM533 410l3.500 4 3.500-4z" fill="#222"/>
<text x="491" y="412" class="d">1</text>
<text x="549" y="412" class="d" textLength="112" lengthAdjust="spacingAndGlyphs">page(s) en largeur sur</text>
<rect x="670.500" y="398.500" width="58" height="19" fill="#fff" stroke="#aaa"/><rect x="712.500" y="399.500" width="15" height="8.500" fill="#f7f7f7" stroke="#ccc"/><rect x="712.500" y="408.500" width="15" height="8.500" fill="#f7f7f7" stroke="#ccc"/><path d="M716 406l3.500-4 3.500 4zM716 410l3.500 4 3.500-4z" fill="#222"/>
<text x="732" y="412" class="d" textLength="57" lengthAdjust="spacingAndGlyphs">en hauteur</text>
<path d="M346 434.500h613" stroke="#dcdcdc"/>

<text x="346" y="462" class="d" textLength="95" lengthAdjust="spacingAndGlyphs">Format d<tspan text-decoration="underline">u</tspan> papier :</text>
<rect x="467.500" y="447.500" width="491" height="21" fill="#fff" stroke="#a8a8a8" stroke-width="1.200"/><rect x="941.500" y="448.500" width="16" height="19" fill="#fdfdfd" stroke="#cfcfcf"/><path d="M945.500 456l4 4 4-4" fill="none" stroke="#555"/>
<text x="471" y="462" class="d" textLength="13">A4</text>
<text x="346" y="487" class="d" textLength="112" lengthAdjust="spacingAndGlyphs">Qua<tspan text-decoration="underline">l</tspan>ité d'impression :</text>
<rect x="467.500" y="472.500" width="491" height="21" fill="#fff" stroke="#a8a8a8" stroke-width="1.200"/><rect x="941.500" y="473.500" width="16" height="19" fill="#fdfdfd" stroke="#cfcfcf"/><path d="M945.500 481l4 4 4-4" fill="none" stroke="#555"/>
<text x="346" y="519" class="d" textLength="161" lengthAdjust="spacingAndGlyphs">Commencer la <tspan text-decoration="underline">n</tspan>umérotation à :</text>
<rect x="516.500" y="505.500" width="41" height="19" fill="#fff" stroke="#aaa"/><text x="520" y="519" class="d" textLength="25">Auto</text>

<g fill="#fbfbfb" stroke="#c4c4c4"><rect x="716.500" y="597.500" width="73" height="21" rx="4"/><rect x="800.500" y="597.500" width="73" height="21" rx="4"/><rect x="884.500" y="597.500" width="73" height="21" rx="4"/><rect x="893.500" y="638.500" width="73" height="21" rx="4"/></g>
<rect x="809.500" y="638.500" width="73" height="21" rx="4" fill="#fbfbfb" stroke="#0067c0" stroke-width="1.400"/>
<text x="753" y="612" class="d m" textLength="53" lengthAdjust="spacingAndGlyphs"><tspan text-decoration="underline">I</tspan>mprimer...</text>
<text x="837" y="612" class="d m" textLength="36" lengthAdjust="spacingAndGlyphs">Ape<tspan text-decoration="underline">r</tspan>çu</text>
<text x="921" y="612" class="d m" textLength="50" lengthAdjust="spacingAndGlyphs"><tspan text-decoration="underline">O</tspan>ptions...</text>
<text x="846" y="653" class="d m" textLength="15" lengthAdjust="spacingAndGlyphs">OK</text>
<text x="930" y="653" class="d m" textLength="41" lengthAdjust="spacingAndGlyphs">Annuler</text>
</svg>
</body></html>
